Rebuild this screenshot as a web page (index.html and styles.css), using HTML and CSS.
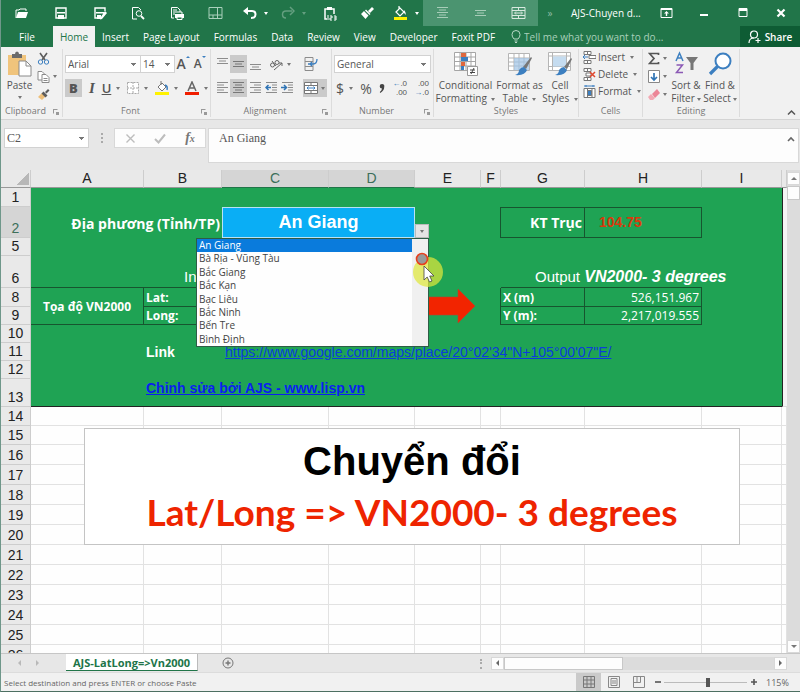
FILE: index.html
```html
<!DOCTYPE html>
<html lang="vi">
<head>
<meta charset="utf-8">
<title>AJS-Chuyen doi</title>
<link rel="stylesheet" href="styles.css">
</head>
<body>
<div class="window">
  <header class="titlebar">
    <div class="quick">
      <button aria-label="Open"><svg width="14" height="14" viewBox="0 0 14 14"><path d="M1 12V4h3l1-1h6v2" fill="none" stroke="#fff"/><path d="M1 12l2-6h10l-2 6z" fill="#fff"/></svg></button>
      <button aria-label="Save"><svg width="14" height="14" viewBox="0 0 14 14"><path d="M2 2h10v10H2z" fill="none" stroke="#fff" stroke-width="1.4"/><path d="M3 6h8v1.500H3zM4 9h6v4H4z" fill="#fff"/></svg></button>
      <button aria-label="Save as"><svg width="14" height="14" viewBox="0 0 14 14"><path d="M12 5V2H2v10h4" fill="none" stroke="#fff" stroke-width="1.400"/><path d="M3 6h8v1.500H3zM4 9h4v4H4zM12 5l2 2-5 6-2 .5.5-2z" fill="#fff"/></svg></button>
      <button aria-label="Print preview"><svg width="14" height="14" viewBox="0 0 14 14" fill="none" stroke="#fff"><path d="M6 13H1.500V1.500h6L10 4"/><circle cx="8" cy="7.500" r="2.800"/><path d="M10 10l3 3" stroke-width="1.800"/></svg></button>
      <button aria-label="Quick print"><svg width="14" height="14" viewBox="0 0 14 14"><path d="M4 12H1.500V1.500h6L10 4v2M3 4h4M3 6h4M3 8h2" fill="none" stroke="#fff"/><path d="M5 8h9v4H5z" fill="#fff"/><path d="M7 6h5v2M7 11h5v2.500H7z" fill="#217549" stroke="#fff"/></svg></button>
      <button aria-label="Freeze panes"><svg width="15" height="14" viewBox="0 0 15 14" fill="none" stroke="#a9d0bb"><path d="M1 1.500h13v11H1zM9.500 1v12M1 9h13M5 9v4"/></svg></button>
    </div>
    <button class="split" aria-label="Undo"><svg width="14" height="14" viewBox="0 0 14 14"><path d="M3 5h6q3.500 0 3.500 3.500T8 12" fill="none" stroke="#fff" stroke-width="2"/><path d="M0 5l5-4v8z" fill="#fff"/></svg><i class="caret"></i></button>
    <button class="split dim" aria-label="Redo"><svg width="14" height="14" viewBox="0 0 14 14"><path d="M11 5H5Q1.500 5 1.500 8.500T5 12" fill="none" stroke="#fff" stroke-width="1.500"/><path d="M9 1l4 4-4 4" fill="none" stroke="#fff" stroke-width="1.500"/></svg><i class="caret"></i></button>
    <button class="single" aria-label="Paste values"><svg width="14" height="15" viewBox="0 0 14 15"><path d="M4 13H2V3h9v5" fill="none" stroke="#fff" stroke-width="1.500"/><path d="M4 1h5v3H4z" fill="#fff"/><path d="M5 9v5M7 10h2v2H7v2h2M11 10h2v4h-2M11 12h2" fill="none" stroke="#fff"/></svg></button>
    <button class="single" aria-label="Format painter"><svg width="14" height="14" viewBox="0 0 14 14"><path d="M12 1l2 2-4 4-2-2zM6 3.500L10.500 8l-1 1L5 4.500zM4 5l4.500 4.500-3 3.500L1 8z" fill="#fff"/></svg></button>
    <button class="split" aria-label="Fill colour"><svg width="15" height="16" viewBox="0 0 15 16"><path d="M3 7l4-4 4 4-4 4zM6 1v4" fill="none" stroke="#fff" stroke-width="1.200"/><path d="M11 5q2 2 2 5l-2-2z" fill="#fff"/><path d="M1 12h13v3H1z" fill="#fff200"/></svg><i class="caret"></i></button>
    <div class="merge">
      <button aria-label="Center"><svg width="13" height="14" viewBox="0 0 13 14" stroke="#a8cdb9"><path d="M1 1.500h11M3 4h7M1 6.500h11M3 9h7M1 11.500h11"/></svg></button>
      <button aria-label="Middle align"><svg width="13" height="14" viewBox="0 0 13 14" stroke="#a8cdb9"><path d="M1 4.500h11M3 7h7M1 9.500h11"/></svg></button>
      <button aria-label="Merge"><svg width="15" height="14" viewBox="0 0 15 14" fill="none" stroke="#d7e9df"><path d="M1 1.500h13v11H1zM1 4.500h13M1 9.500h13M7.500 1v3M7.500 10v3M4 7h7M5 5.500L3.500 7 5 8.500M10 5.500L11.500 7 10 8.500"/></svg></button>
    </div>
    <span class="more">»</span>
    <h1 class="doc">AJS-Chuyen d...</h1>
    <div class="wincontrols">
      <button aria-label="Ribbon options"><svg width="13" height="12" viewBox="0 0 13 12"><path d="M1 1.500h11v9H1z" fill="none" stroke="#fff"/><path d="M1 2h11v1H1zM6.500 4L9 6.500H7.200V9H5.800V6.500H4z" fill="#fff"/></svg></button>
      <button aria-label="Minimize"><svg width="12" height="12" viewBox="0 0 12 12"><path d="M2 8h8" stroke="#fff" stroke-width="2"/></svg></button>
      <button aria-label="Maximize"><svg width="12" height="12" viewBox="0 0 12 12"><path d="M2 1.500h8v8H2z" fill="none" stroke="#fff"/><path d="M2 1h8v3H2z" fill="#fff"/></svg></button>
      <button aria-label="Close"><svg width="12" height="12" viewBox="0 0 12 12"><path d="M2.500 2.500l7 7M9.500 2.500l-7 7" stroke="#fff" stroke-width="2.200"/></svg></button>
    </div>
  </header>

  <nav class="tabs">
    <button class="file">File</button>
    <button class="active">Home</button>
    <button>Insert</button>
    <button>Page Layout</button>
    <button>Formulas</button>
    <button>Data</button>
    <button>Review</button>
    <button>View</button>
    <button>Developer</button>
    <button>Foxit PDF</button>
    <label class="tell"><svg width="10" height="13" viewBox="0 0 10 13" fill="none" stroke="#b9d8c7"><path d="M3 9Q1 7 1 4.500a4 4 0 0 1 8 0Q9 7 7 9zM3.500 11h3M4 12.500h2"/></svg><input type="text" placeholder="Tell me what you want to do..."></label>
    <button class="share"><svg width="13" height="14" viewBox="0 0 13 14" fill="none" stroke="#fff" stroke-width="1.200"><circle cx="6" cy="4.500" r="3.500"/><path d="M1 13q0-5 5-5M10 8v5M7.500 10.500h5"/></svg>Share</button>
  </nav>

  <section class="ribbon">
    <div class="group">
      <div class="tools clipboard">
        <button class="big"><svg width="25" height="26" viewBox="0 0 25 26"><path d="M1 4h18v20H1z" fill="#f0c47c"/><path d="M5 3h3q0-2.500 2-2.500T12 3h3v4H5z" fill="#6b6b6b"/><path d="M12 10h7l5 5v10H12z" fill="#fff" stroke="#8a8a8a"/><path d="M19 10v5h5" fill="none" stroke="#8a8a8a"/></svg><span>Paste</span><i class="caret"></i></button>
        <div class="stack">
          <button aria-label="Cut"><svg width="13" height="13" viewBox="0 0 13 13" fill="none"><path d="M3 1l5 7M10 1L5 8" stroke="#5c5c5c" stroke-width="1.600"/><circle cx="3.500" cy="10" r="2.200" stroke="#3c7fc0"/><circle cx="9.500" cy="10" r="2.200" stroke="#3c7fc0"/></svg></button>
          <button aria-label="Copy"><svg width="13" height="13" viewBox="0 0 13 13" fill="#fff" stroke="#8a8a8a"><path d="M1 1.500h4l3 3V10H1z"/><path d="M5 4.500h4l3 3V12.500H5zM6.500 8.500h4M6.500 10.500h4"/></svg><i class="caret"></i></button>
          <button aria-label="Format painter"><svg width="13" height="13" viewBox="0 0 13 13"><path d="M1 9l4-4 4 3-4 4z" fill="#eebf79"/><path d="M4.500 5.500l2-2 4 4-2 2zM8 4l3-3 1.500 1.500-3 3z" fill="#5c5c5c"/></svg></button>
        </div>
      </div>
      <div class="caption launcher">Clipboard<i class="launch"></i></div>
    </div>

    <div class="group">
      <div class="tools rows">
        <div class="line">
          <select class="fontname" aria-label="Font"><option>Arial</option></select>
          <select class="fontsize" aria-label="Font size"><option>14</option></select>
          <button class="grow" aria-label="Grow font">A<i class="up"></i></button>
          <button class="grow small" aria-label="Shrink font">A<i class="down"></i></button>
        </div>
        <div class="line spread">
          <button class="letter on"><b>B</b></button>
          <button class="letter serif"><em>I</em></button>
          <button class="letter"><u>U</u><i class="caret"></i></button>
          <button aria-label="Borders"><svg width="12" height="12" viewBox="0 0 12 12" fill="#fff" stroke="#a8a8a8"><path d="M.5.500h11v11H.5zM6 0v12M0 6h12" stroke-dasharray="2 1"/></svg><i class="caret"></i></button>
          <button aria-label="Fill colour"><svg width="14" height="15" viewBox="0 0 14 15"><path d="M3 6l4-4 4 4-4 4zM6 0v4" fill="#fff" stroke="#777"/><path d="M10 4q3 1 2 5" fill="none" stroke="#3c7fc0" stroke-width="1.500"/><path d="M0 11h14v3H0z" fill="#fff200"/></svg><i class="caret"></i></button>
          <button aria-label="Font colour"><svg width="14" height="15" viewBox="0 0 14 15"><path d="M3 10l4-9 4 9M4.500 7h5" fill="none" stroke="#666" stroke-width="1.500"/><path d="M0 11h14v3H0z" fill="#f01e00"/></svg><i class="caret"></i></button>
        </div>
      </div>
      <div class="caption launcher">Font<i class="launch"></i></div>
    </div>

    <div class="group">
      <div class="tools rows align">
        <div class="line">
          <button class="cell" aria-label="Top align"><svg width="13" height="14" viewBox="0 0 13 14" stroke="#8c8c8c"><path d="M1 1.500h11M3 4h7M1 6.500h11"/></svg></button>
          <button class="cell on" aria-label="Middle align"><svg width="13" height="14" viewBox="0 0 13 14" stroke="#777"><path d="M1 4.500h11M3 7h7M1 9.500h11"/></svg></button>
          <button class="cell" aria-label="Bottom align"><svg width="13" height="14" viewBox="0 0 13 14" stroke="#8c8c8c"><path d="M1 7.500h11M3 10h7M1 12.500h11"/></svg></button>
          <button class="wide" aria-label="Orientation"><svg width="14" height="13" viewBox="0 0 14 13" fill="none" stroke="#666"><circle cx="3.500" cy="7" r="2"/><path d="M3 3l4 5"/><circle cx="8" cy="4.500" r="2"/><path d="M5 12l8-7M13 8V5h-3"/></svg><i class="caret"></i></button>
          <button class="last" aria-label="Wrap text"><svg width="14" height="14" viewBox="0 0 14 14" fill="none" stroke="#8c8c8c"><path d="M1 .5h8v13H1zM1 4.500h8M1 9.500h8"/><path d="M4 7h5q4 0 4-5M8 5L6 7l2 2" stroke="#3c7fc0" stroke-width="1.300"/></svg></button>
        </div>
        <div class="line">
          <button class="cell" aria-label="Align left"><svg width="13" height="14" viewBox="0 0 13 14" stroke="#8c8c8c"><path d="M1 1.500h11M1 4h7M1 6.500h11M1 9h7M1 11.500h11"/></svg></button>
          <button class="cell on" aria-label="Center"><svg width="13" height="14" viewBox="0 0 13 14" stroke="#777"><path d="M1 1.500h11M3 4h7M1 6.500h11M3 9h7M1 11.500h11"/></svg></button>
          <button class="cell" aria-label="Align right"><svg width="13" height="14" viewBox="0 0 13 14" stroke="#8c8c8c"><path d="M1 1.500h11M5 4h7M1 6.500h11M5 9h7M1 11.500h11"/></svg></button>
          <button class="cell" aria-label="Decrease indent"><svg width="13" height="14" viewBox="0 0 13 14" fill="none" stroke="#8c8c8c"><path d="M1 1.500h11M7 4h5M7 6.500h5M7 9h5M1 11.500h11"/><path d="M6 6.500H1.500M3.500 4L1 6.500 3.500 9" stroke="#2f74b5" stroke-width="1.500"/></svg></button>
          <button class="cell" aria-label="Increase indent"><svg width="13" height="14" viewBox="0 0 13 14" fill="none" stroke="#8c8c8c"><path d="M1 1.500h11M7 4h5M7 6.500h5M7 9h5M1 11.500h11"/><path d="M0 6.500h5M3 4l2.500 2.500L3 9" stroke="#2f74b5" stroke-width="1.500"/></svg></button>
          <button class="last mergebtn on" aria-label="Merge and center"><svg width="14" height="14" viewBox="0 0 14 14" fill="#fff" stroke="#777"><path d="M.5 1.500h13v11H.5zM.5 4.500h13M.5 9.500h13M7 1v3M7 10v3"/><path d="M3 7h8M4.500 5.500L3 7l1.500 1.500M9.500 5.500L11 7 9.500 8.500" fill="none" stroke="#3c7fc0"/></svg><i class="caret"></i></button>
        </div>
      </div>
      <div class="caption launcher">Alignment<i class="launch"></i></div>
    </div>

    <div class="group">
      <div class="tools rows">
        <div class="line"><select class="numfmt" aria-label="Number format"><option>General</option></select></div>
        <div class="line spread numbers">
          <button class="sym">$<i class="caret"></i></button>
          <button class="sym">%</button>
          <button aria-label="Comma style"><svg width="6" height="11" viewBox="0 0 6 11"><path d="M3 1a2.300 2.300 0 0 1 2.300 2.600Q5.200 8 1.200 10L.8 9Q3 7.500 3 5.600A2.300 2.300 0 0 1 3 1z" fill="#444"/></svg></button>
          <button aria-label="Increase decimal" class="dec"><span><em>←</em>.0</span><span>.00</span></button>
          <button aria-label="Decrease decimal" class="dec"><span>.00</span><span><em>→</em>.0</span></button>
        </div>
      </div>
      <div class="caption launcher">Number<i class="launch"></i></div>
    </div>

    <div class="group">
      <div class="tools bigs">
        <button class="big w1"><svg width="26" height="26" viewBox="0 0 26 26"><path d="M1.500 1.500h21v18h-21zM1 6h22M1 10.500h22M1 15h22M7 1v19M13 1v19M18 1v19" fill="#fff" stroke="#a5a5a5"/><path d="M8 2h5v4H8zM8 11h4v4H8z" fill="#e0683e"/><path d="M8 6h7v4H8zM8 15h3v4H8z" fill="#3c7fc0"/><path d="M14.500 15.500h10v9h-10z" fill="#fff" stroke="#999"/><path d="M17 19h5M17 21.500h5M21 17l-3 6" stroke="#444"/></svg><span>Conditional</span><span>Formatting <i class="caret"></i></span></button>
        <button class="big w2"><svg width="26" height="26" viewBox="0 0 26 26"><path d="M1.500 2.500h21v17h-21zM1 7h22M1 11h22M1 15h22M7 2v18M12 2v18M17 2v18" fill="#fff" stroke="#b5b5b5"/><path d="M7 7h15v12H7z" fill="#9fc3e6" opacity=".7"/><path d="M25 7l-6 11-3-2 8-10z" fill="#777"/><path d="M17 16l3 3q-2 6-12 5 4-1 4-5 2-3 5-3z" fill="#3c7fc0"/></svg><span>Format as</span><span>Table <i class="caret"></i></span></button>
        <button class="big w3"><svg width="26" height="26" viewBox="0 0 26 26"><path d="M1.500 1.500h22v18h-22zM1 5h23M1 15.500h23M5.500 1v19M19.500 1v19" fill="#fff" stroke="#b5b5b5"/><path d="M6 5.500h13v10H6z" fill="#c5dcf0"/><path d="M25 8l-5 10-3-2 7-9z" fill="#777"/><path d="M17 16l3 3q-2 6-12 5 4-1 4-5 2-3 5-3z" fill="#3c7fc0"/></svg><span>Cell</span><span>Styles <i class="caret"></i></span></button>
      </div>
      <div class="caption">Styles</div>
    </div>

    <div class="group">
      <div class="tools cells">
        <button><svg width="13" height="13" viewBox="0 0 13 13" fill="#fff" stroke="#777"><path d="M1 .5h7v3H1zM1 9.500h7v3H1zM4.500 0v4M4.500 9v4M6 4.500h7v3H6z"/><path d="M0 6h5M2 4L0 6l2 2" stroke="#3c7fc0"/></svg>Insert<i class="caret"></i></button>
        <button><svg width="13" height="13" viewBox="0 0 13 13" fill="#fff" stroke="#777"><path d="M1 .5h7v3H1zM1 9.500h7v3H1zM4.500 0v4M4.500 9v4M3 5h5v3H3z"/><path d="M7 4l5 5M12 4L7 9" stroke="#e0482e" stroke-width="1.500"/></svg>Delete<i class="caret"></i></button>
        <button><svg width="13" height="13" viewBox="0 0 13 13" fill="#fff" stroke="#777"><path d="M1 3.500h11v9H1zM4.500 3v9M9 3v9"/><path d="M4.500 5.500h4v5h-4z" fill="#3c7fc0"/><path d="M1 1h11M3 0v2M10 0v2" stroke="#3c7fc0"/></svg>Format<i class="caret"></i></button>
      </div>
      <div class="caption">Cells</div>
    </div>

    <div class="group">
      <div class="tools editing">
        <div class="stack">
          <button aria-label="AutoSum"><svg width="12" height="13" viewBox="0 0 12 13"><path d="M10.500 3V1.500h-9L6 6.500l-4.500 5h9V10" fill="none" stroke="#555" stroke-width="1.700"/></svg><i class="caret"></i></button>
          <button aria-label="Fill"><svg width="12" height="13" viewBox="0 0 12 13" fill="#fff"><path d="M.5.500h11v12H.5z" stroke="#888"/><path d="M6 3v7M3 7l3 3 3-3" fill="none" stroke="#2f74b5" stroke-width="1.700"/></svg><i class="caret"></i></button>
          <button aria-label="Clear"><svg width="12" height="13" viewBox="0 0 12 13"><path d="M4 6l5-5 3 4-5 5z" fill="#ec8697"/><path d="M0 9l3-3 4 4-2 2H2z" fill="#f3a9b4"/></svg><i class="caret"></i></button>
        </div>
        <button class="big"><svg width="25" height="26" viewBox="0 0 25 26"><path d="M2 10L5.500 2 9 10M3.500 7h4" fill="none" stroke="#3c7fc0" stroke-width="1.500"/><path d="M2.500 14h6l-6 7.500h6.500" fill="none" stroke="#8b59b5" stroke-width="1.500"/><path d="M12 6h12l-4.500 6v7h-3v-7z" fill="#777"/></svg><span>Sort &amp;</span><span>Filter<i class="caret"></i></span></button>
        <button class="big"><svg width="25" height="26" viewBox="0 0 25 26"><circle cx="15" cy="10" r="7.500" fill="#fff" stroke="#3c7fc0" stroke-width="2"/><path d="M9.500 15.500L2 23" stroke="#3c7fc0" stroke-width="3.200"/></svg><span>Find &amp;</span><span>Select<i class="caret"></i></span></button>
      </div>
      <div class="caption">Editing</div>
    </div>
    <button class="collapse" aria-label="Collapse ribbon"><svg width="9" height="7" viewBox="0 0 9 7"><path d="M1 5.500L4.500 2 8 5.500" fill="none" stroke="#555" stroke-width="1.500"/></svg></button>
  </section>

  <section class="formula">
    <select class="namebox" aria-label="Name box"><option>C2</option></select>
    <span class="grip"></span>
    <div class="fx">
      <button aria-label="Cancel"><svg width="11" height="11" viewBox="0 0 11 11"><path d="M1.500 1.500l8 8M9.500 1.500l-8 8" stroke="#bdbdbd" stroke-width="1.400"/></svg></button>
      <button aria-label="Enter"><svg width="12" height="11" viewBox="0 0 12 11"><path d="M1 6l3.500 3.500L11 1.500" fill="none" stroke="#bdbdbd" stroke-width="2"/></svg></button>
      <button aria-label="Insert function" class="fn">f<sub>x</sub></button>
    </div>
    <div class="entry"><input type="text" value="An Giang" aria-label="Formula bar"><svg width="8" height="6" viewBox="0 0 8 6"><path d="M1 5l3-3 3 3" fill="none" stroke="#666" stroke-width="1.600"/></svg></div>
  </section>

  <main class="sheet">
    <div class="canvas">
      <table>
        <colgroup><col class="c-h"><col class="c-a"><col class="c-b"><col class="c-c"><col class="c-d"><col class="c-e"><col class="c-f"><col class="c-g"><col class="c-hh"><col class="c-i"><col></colgroup>
        <thead><tr><th class="corner"></th><th>A</th><th>B</th><th class="sel">C</th><th class="sel">D</th><th>E</th><th>F</th><th>G</th><th>H</th><th>I</th><th></th></tr></thead>
        <tbody class="green">
          <tr class="h19"><th>1</th><td colspan="9"></td><td class="out"></td></tr>
          <tr class="h31"><th class="sel">2</th><td colspan="2" class="place">Địa phương (Tỉnh/TP)</td><td colspan="2" class="picked">An Giang</td><td colspan="2" class="box-left"></td><td class="box kt">KT Trục</td><td class="box axis">104.75</td><td></td><td class="out"></td></tr>
          <tr class="h18"><th>5</th><td colspan="9"></td><td class="out"></td></tr>
          <tr class="h32"><th>6</th><td class="under"></td><td colspan="3" class="under in">Input</td><td colspan="2"></td><td colspan="2" class="under output">Output <b>VN2000- 3 degrees</b></td><td></td><td class="out"></td></tr>
          <tr class="h19"><th>8</th><td rowspan="2" class="box toado">Tọa độ VN2000</td><td class="box key">Lat:</td><td colspan="2" class="box"></td><td colspan="2" class="box-left"></td><td class="box key">X (m)</td><td class="box num">526,151.967</td><td></td><td class="out"></td></tr>
          <tr class="h18"><th>9</th><td class="box key">Long:</td><td colspan="2" class="box"></td><td colspan="2" class="box-left"></td><td class="box key">Y (m):</td><td class="box num">2,217,019.555</td><td></td><td class="out"></td></tr>
          <tr class="h18"><th>10</th><td colspan="9"></td><td class="out"></td></tr>
          <tr class="h18"><th>11</th><td></td><td class="linkname">Link</td><td colspan="7" class="link"><a href="#map">https://www.google.com/maps/place/20°02'34"N+105°00'07"E/</a></td><td class="out"></td></tr>
          <tr class="h18"><th>12</th><td colspan="9"></td><td class="out"></td></tr>
          <tr class="h28 end"><th>13</th><td></td><td colspan="8" class="credit"><a href="#lisp">Chỉnh sửa bởi AJS - www.lisp.vn</a></td><td class="out"></td></tr>
        </tbody>
        <tbody class="plain">
          <tr class="h19"><th>14</th><td></td><td></td><td></td><td></td><td></td><td></td><td></td><td></td><td></td><td></td></tr>
          <tr class="h19"><th>15</th><td></td><td></td><td></td><td></td><td></td><td></td><td></td><td></td><td></td><td></td></tr>
          <tr><th>16</th><td></td><td></td><td></td><td></td><td></td><td></td><td></td><td></td><td></td><td></td></tr>
          <tr><th>17</th><td></td><td></td><td></td><td></td><td></td><td></td><td></td><td></td><td></td><td></td></tr>
          <tr><th>18</th><td></td><td></td><td></td><td></td><td></td><td></td><td></td><td></td><td></td><td></td></tr>
          <tr><th>19</th><td></td><td></td><td></td><td></td><td></td><td></td><td></td><td></td><td></td><td></td></tr>
          <tr><th>20</th><td></td><td></td><td></td><td></td><td></td><td></td><td></td><td></td><td></td><td></td></tr>
          <tr><th>21</th><td></td><td></td><td></td><td></td><td></td><td></td><td></td><td></td><td></td><td></td></tr>
          <tr><th>22</th><td></td><td></td><td></td><td></td><td></td><td></td><td></td><td></td><td></td><td></td></tr>
          <tr><th>23</th><td></td><td></td><td></td><td></td><td></td><td></td><td></td><td></td><td></td><td></td></tr>
          <tr><th>24</th><td></td><td></td><td></td><td></td><td></td><td></td><td></td><td></td><td></td><td></td></tr>
          <tr><th>25</th><td></td><td></td><td></td><td></td><td></td><td></td><td></td><td></td><td></td><td></td></tr>
          <tr><th>26</th><td></td><td></td><td></td><td></td><td></td><td></td><td></td><td></td><td></td><td></td></tr>
        </tbody>
      </table>

      <svg class="arrow" width="48" height="38" viewBox="0 0 48 38"><path d="M0 10h30V2l17 17-17 17v-8H0z" fill="#f22400" stroke="#b5432c" stroke-width=".6"/></svg>
      <button class="opener" aria-label="Open list"><i class="caret"></i></button>
      <div class="dropdown">
        <ul role="listbox" aria-label="Địa phương">
          <li role="option" aria-selected="true">An Giang</li>
          <li role="option">Bà Rịa - Vũng Tàu</li>
          <li role="option">Bắc Giang</li>
          <li role="option">Bắc Kạn</li>
          <li role="option">Bạc Liêu</li>
          <li role="option">Bắc Ninh</li>
          <li role="option">Bến Tre</li>
          <li role="option">Bình Định</li>
        </ul>
        <div class="track"></div>
      </div>
      <svg class="pointer" width="40" height="40" viewBox="0 0 40 40"><circle cx="18" cy="22" r="15" fill="#dfe83c" opacity=".72"/><circle cx="12" cy="9" r="5.500" fill="#999" stroke="#e8401c" stroke-width="1.600"/><path d="M14 16v14l3.200-3 2.300 5 2.500-1-2.300-5H24z" fill="#fff" stroke="#444" stroke-width=".8"/></svg>
      <div class="textbox">
        <p class="big-title">Chuyển đổi</p>
        <p class="big-sub">Lat/Long =&gt; VN2000- 3 degrees</p>
      </div>
    </div>
    <div class="vscroll"><button aria-label="Scroll up"><i class="tri up"></i></button><span class="thumb"></span><button class="bottom" aria-label="Scroll down"><i class="tri down"></i></button></div>
  </main>

  <footer class="sheetbar">
    <div class="navs"><i class="tri left"></i><i class="tri right"></i></div>
    <button class="sheettab">AJS-LatLong=&gt;Vn2000</button>
    <button class="add" aria-label="New sheet"><svg width="12" height="12" viewBox="0 0 12 12" fill="none" stroke="#777"><circle cx="6" cy="6" r="5"/><path d="M6 3.500v5M3.500 6h5" stroke-width="1.400"/></svg></button>
    <span class="grip"></span>
    <div class="hscroll"><button aria-label="Scroll left"><i class="tri left"></i></button><span class="thumb"></span><button class="bottom" aria-label="Scroll right"><i class="tri right"></i></button></div>
  </footer>

  <footer class="status">
    <span class="msg">Select destination and press ENTER or choose Paste</span>
    <button class="view on" aria-label="Normal view"><svg width="12" height="12" viewBox="0 0 12 12" fill="none" stroke="#777"><path d="M.5.500h11v11H.5zM0 4h12M0 8h12M4 0v12M8 0v12"/></svg></button>
    <button class="view" aria-label="Page layout view"><svg width="12" height="12" viewBox="0 0 12 12" fill="none" stroke="#888"><path d="M.5.500h11v11H.5zM3 2.500h6v7H3zM5 4v4M7 4v4"/></svg></button>
    <button class="view" aria-label="Page break view"><svg width="12" height="12" viewBox="0 0 12 12" fill="none" stroke="#888"><path d="M.5.500h11v11H.5zM.5 6.500h7V.5M4 .5v6"/></svg></button>
    <button class="zoombtn" aria-label="Zoom out"><svg width="8" height="8" viewBox="0 0 8 8"><path d="M1 4h6" stroke="#555" stroke-width="1.600"/></svg></button>
    <input type="range" min="0" max="100" value="53" aria-label="Zoom">
    <button class="zoombtn" aria-label="Zoom in"><svg width="8" height="8" viewBox="0 0 8 8"><path d="M1 4h6M4 1v6" stroke="#555" stroke-width="1.600"/></svg></button>
    <span class="pct">115%</span>
  </footer>
</div>
</body>
</html>
```
FILE: styles.css
```css
* { box-sizing: border-box; }

body {
  margin: 0;
  font-family: "Open Sans", "Noto Sans", sans-serif;
  font-size: 10px;
  color: #555;
}

button, input, select {
  margin: 0;
  padding: 0;
  border: 0;
  background: none;
  font: inherit;
  color: inherit;
  border-radius: 0;
  appearance: none;
}

button {
  display: inline-flex;
  align-items: center;
  justify-content: center;
  white-space: nowrap;
}

svg { display: block; flex: none; }
p, h1, ul { margin: 0; padding: 0; }

.window {
  display: flex;
  flex-direction: column;
  height: 100vh;
  background: #e7e7e7;
  border-left: 1px solid #6f978a;
  border-bottom: 1px solid #4d6f62;
  overflow: hidden;
}

.caret {
  flex: none;
  display: inline-block;
  border-style: solid;
  border-color: #777 transparent transparent;
  border-width: 3px 2px 0;
}

/* Title bar */
.titlebar {
  display: flex;
  align-items: center;
  flex: 0 0 26px;
  background: #217549;
  color: #fff;
}
.titlebar .caret { border-top-color: #fff; }
.quick { display: grid; grid-template-columns: repeat(6, 1fr); width: 232px; margin-left: 2px; }
.split { width: 38px; gap: 7px; padding-left: 3px; }
.single { width: 37px; }
.dim { opacity: .3; }
.merge {
  display: grid;
  grid-template-columns: repeat(3, 1fr);
  align-self: stretch;
  width: 115px;
  background: #4b9470;
}
.more { width: 24px; text-align: center; line-height: 12px; color: #8fbba3; }
.doc { flex: 1; padding-left: 9px; font-size: 10px; font-weight: 400; white-space: nowrap; }
.wincontrols { display: grid; grid-template-columns: repeat(4, 1fr); width: 153px; }

/* Ribbon tabs */
.tabs {
  display: flex;
  flex: 0 0 21px;
  background: #217549;
  color: #fff;
}
.tabs button { padding: 0 7px; font-weight: 500; }
.tabs .file { width: 52px; }
.tabs .active { background: #f1f1f1; color: #217549; width: 42px; }
.tell { display: flex; flex: 1; align-items: center; gap: 3px; padding-left: 9px; }
.tell input { flex: 1; min-width: 0; }
.tell input::placeholder { color: #a9d0bb; opacity: 1; }
.tabs .share { width: 60px; gap: 4px; background: #0e5c34; font-weight: 600; }

/* Ribbon */
.ribbon {
  display: grid;
  grid-template-columns: 62px 148px 121px 102px 145px 64px 97px 1fr;
  flex: 0 0 73px;
  background: #f1f1f1;
  border-bottom: 1px solid #d4d4d4;
}
.group { display: flex; flex-direction: column; border-right: 1px solid #dcdcdc; margin: 2px 0; }
.tools { flex: 1; display: flex; }
.caption { position: relative; height: 12px; font-size: 9px; line-height: 12px; text-align: center; color: #777; }
.launcher { padding-right: 12px; font-size: 9px; }
.launch {
  position: absolute;
  right: 4px;
  top: 4px;
  width: 5px;
  height: 5px;
  border: 1px solid #999;
  border-right-color: transparent;
  border-bottom-color: transparent;
}
.launch::after { content: ""; position: absolute; left: 2px; top: 2px; width: 3px; height: 3px; background: #999; }

.big { flex-direction: column; justify-content: flex-start; line-height: 13px; padding-top: 2px; }
.big svg { margin-bottom: 2px; }
.big .caret { vertical-align: middle; margin-left: 2px; }
.clipboard { padding-left: 6px; }
.clipboard .big { width: 25px; }
.clipboard .big .caret { margin: 4px 0 0; }
.stack { display: flex; flex-direction: column; gap: 4px; padding: 2px 0 0 5px; align-items: flex-start; }
.stack button { gap: 3px; height: 14px; }

.rows { flex-direction: column; gap: 6px; padding: 6px 2px 0 2px; }
.line { display: flex; align-items: center; height: 18px; }
.spread { justify-content: space-between; }
.spread button { gap: 5px; }
select {
  height: 18px;
  padding: 0 2px;
  border: 1px solid #d2d2d2;
  background: #fff conic-gradient(from -45deg at 50% 100%, #777 90deg, transparent 0) no-repeat right 4px center / 5px 3px;
}
.fontname { width: 76px; }
.fontsize { width: 34px; border-left: 0; }
.grow { position: relative; flex: 1; font-size: 14px; font-weight: 600; line-height: 16px; }
.grow.small { font-size: 12px; }
.grow i { border: 2px solid transparent; align-self: flex-start; }
.grow .up { border-bottom-color: #3c7fc0; border-top: 0; }
.grow .down { border-top-color: #3c7fc0; border-bottom: 0; }
.letter { font-size: 13px; height: 18px; font-weight: 600; }
.on { background: #cacaca; }
.letter.on { width: 17px; }
.serif { font-family: "Liberation Serif", serif; font-size: 15px; font-weight: 700; }
.align { padding-left: 3px; }
.cell { width: 16px; height: 18px; }
.cell.on { width: 17px; }
.wide { gap: 4px; margin-left: 6px; }
.last { margin-left: auto; width: 24px; height: 18px; gap: 3px; justify-content: flex-start; padding-left: 1px; }
.mergebtn { margin-right: 2px; }
.wide + .last { margin-right: 2px; }
.numfmt { width: 97px; }
.numbers { padding: 0 2px; }
.sym { font-size: 14px; }
.dec { flex-direction: column; align-items: flex-end; font-family: "Liberation Sans", sans-serif; font-size: 8px; line-height: 9px; }
.spread .dec { gap: 0; }
.dec em { color: #2f74b5; font-style: normal; }
.bigs .w1 { width: 61px; padding-left: 2px; }
.bigs .w2 { width: 47px; padding-left: 2px; }
.bigs .w3 { width: 36px; }
.cells { flex-direction: column; align-items: flex-start; gap: 3px; padding: 1px 0 0 4px; }
.cells button { gap: 2px; height: 14px; }
.cells .caret { margin-left: 3px; }
.editing .big { width: 34px; }
.editing .stack { width: 26px; }
.collapse { align-self: end; justify-self: end; padding: 3px 4px; }

/* Formula bar */
.formula { display: flex; flex: 0 0 50px; padding: 8px 1px 7px 3px; align-items: flex-start; }
.namebox { width: 85px; height: 20px; }
.namebox, .entry, .fn { font-family: "Liberation Serif", serif; font-size: 12px; }
.grip { width: 25px; height: 20px; background: radial-gradient(circle, #aaa 1px, transparent 1px) center / 4px 4px no-repeat, radial-gradient(circle, #aaa 1px, transparent 1px) center 4px / 4px 4px no-repeat, radial-gradient(circle, #aaa 1px, transparent 1px) center 12px / 4px 4px no-repeat; }
.fx { display: grid; grid-template-columns: repeat(3, 1fr); width: 92px; height: 20px; border: 1px solid #d8d8d8; background: #fdfdfd; }
.fn { font-style: italic; font-size: 14px; font-weight: 700; color: #777; }
.fn sub { font-size: 10px; }
.entry { display: flex; flex: 1; align-items: flex-start; margin-left: 2px; height: 35px; border: 1px solid #d8d8d8; background: #fdfdfd; padding: 1px 3px 0 10px; }
.entry input { flex: 1; min-width: 0; line-height: 16px; }
.entry svg { margin-top: 6px; }

/* Worksheet */
.sheet { display: flex; flex: 1; min-height: 0; border-bottom: 1px solid #c6c6c6; }
.canvas { position: relative; flex: 1; min-width: 0; overflow: hidden; font-family: "Liberation Sans", sans-serif; }
table { width: 100%; table-layout: fixed; border-spacing: 0; font-size: 14px; color: #222; }
.c-h { width: 30px; }
.c-a { width: 113px; }
.c-b { width: 78px; }
.c-c { width: 107px; }
.c-d { width: 86px; }
.c-e { width: 66px; }
.c-f { width: 20px; }
.c-g { width: 84px; }
.c-hh { width: 117px; }
.c-i { width: 80px; }
th, td { padding: 0; height: 20px; line-height: 17px; vertical-align: bottom; white-space: nowrap; }
th { font-weight: 400; background: #e9e9e9; border-right: 1px solid #cdcdcd; border-bottom: 1px solid #cdcdcd; }
thead th { height: 18px; border-bottom-color: #999; }
.corner { background: linear-gradient(135deg, transparent 50%, #b8b8b8 50%) no-repeat 16px 3px / 12px 12px #e9e9e9; }
.sel { background: #d5d5d5; color: #3c6f5a; }
thead .sel { border-bottom-color: #217549; }
.h18 > * { height: 18px; }
.h19 > * { height: 19px; }
.h28 > * { height: 28px; }
.h31 > * { height: 31px; }
.h32 > * { height: 32px; }
.green td { background: #1fa354; color: #fff; }
.green .out { background: #f4f4f4; border-left: 1px solid #222; }
.end td { border-bottom: 1px solid #222; }
.green .end .out { border-bottom-color: #ddd; }
.plain td { background: #fefefe; border-right: 1px solid #e2e2e2; border-bottom: 1px solid #e2e2e2; }
.box { border-right: 1px solid #17552f; border-bottom: 1px solid #17552f; }
.box-left { border-right: 1px solid #17552f; }
.under { border-bottom: 1px solid #17552f; }
.h31 .box { border-top: 1px solid #17552f; }
.place, .kt, .toado, .key, .num { font-family: "Open Sans", "Noto Sans", sans-serif; font-weight: 700; }
.place, .kt { text-align: right; padding: 0 2px 6px 0; font-size: 14px; }
.green .picked { background: #0aaef5; border: 1px solid #b9e2f5; font-size: 18px; font-weight: 700; text-align: center; vertical-align: middle; }
.green .axis { color: #d93a0c; font-weight: 700; padding: 0 0 6px 14px; }
.in { padding-left: 40px; font-size: 15px; }
.h32 td { line-height: 20px; }
.output { padding-left: 34px; font-size: 15px; }
.output b { font-style: italic; font-size: 16px; }
.toado { text-align: center; vertical-align: middle; font-size: 12px; }
.key { padding-left: 2px; font-size: 12px; }
.num { padding-right: 2px; font-size: 12px; font-weight: 400; text-align: right; }
.linkname { padding-left: 2px; font-weight: 700; }
.link { padding-left: 3px; }
.sheet a { color: #0a3cdc; }
.credit { padding: 0 0 9px 2px; font-weight: 700; }
.green .credit a { color: #0a1ef0; }

.arrow { position: absolute; left: 427px; top: 117px; }
.opener { position: absolute; left: 414px; top: 54px; width: 14px; height: 14px; background: #e4e4e4; border: 1px solid #bbb; }
.dropdown {
  position: absolute;
  left: 195px;
  top: 68px;
  display: flex;
  width: 233px;
  height: 109px;
  border: 1px solid #2e5c46;
  background: #fefefe;
  font-family: "Open Sans", "Noto Sans", sans-serif;
  font-size: 10px;
}
.dropdown ul { flex: 1; display: grid; grid-template-rows: repeat(8, 1fr); list-style: none; }
.dropdown li { padding-left: 2px; line-height: 13px; color: #444; }
.dropdown li[aria-selected] { background: #0a7bdc; color: #fff; }
.track { width: 16px; background: #f0f0f0; }
.pointer { position: absolute; left: 409px; top: 80px; }
.textbox {
  position: absolute;
  left: 83px;
  right: 47px;
  top: 258px;
  height: 117px;
  padding-top: 8px;
  border: 1px solid #c4c4c4;
  background: #fff;
  text-align: center;
  font-weight: 700;
}
.big-title { font-size: 40px; line-height: 48px; color: #000; }
.big-sub { font-family: Lato, sans-serif; font-size: 37px; line-height: 54px; color: #ee2400; white-space: nowrap; }

.tri { border: 3px solid transparent; }
.tri.up { border-top: 0; border-bottom-color: #777; }
.tri.down { border-bottom: 0; border-top-color: #777; }
.tri.left { border-left: 0; border-right-color: #666; }
.tri.right { border-right: 0; border-left-color: #666; }
.vscroll { display: flex; flex-direction: column; flex: 0 0 13px; gap: 1px; padding-top: 2px; background: #dcdcdc; }
.vscroll button, .hscroll button { width: 13px; height: 13px; background: #fdfdfd; border: 1px solid #d8d8d8; }
.vscroll .thumb { height: 14px; background: #fdfdfd; border: 1px solid #c8c8c8; }
.vscroll .bottom { margin-top: auto; }

.sheetbar { display: flex; flex: 0 0 18px; align-items: center; background: #e7e7e7; }
.navs { display: flex; gap: 15px; width: 65px; padding-left: 17px; opacity: .35; }
.sheettab { align-self: stretch; margin-bottom: 1px; padding: 0 7px; background: #fff; border-bottom: 1px solid #217549; border-right: 1px solid #bbb; color: #217549; font-size: 11px; font-weight: 700; }
.add { margin-left: 24px; margin-right: auto; }
.hscroll { display: flex; width: 296px; margin-right: 13px; background: #dcdcdc; }
.hscroll .thumb { width: 119px; background: #fdfdfd; border: 1px solid #c8c8c8; }
.hscroll .bottom { margin-left: auto; }
.sheetbar .grip { width: 20px; height: 18px; }

.status { display: flex; flex: 0 0 19px; align-items: center; background: #f1f1f1; border-top: 1px solid #dcdcdc; font-size: 9px; color: #666; }
.msg { flex: 1; padding-left: 3px; font-size: 8px; }
.view { width: 25px; align-self: stretch; }
.zoombtn { width: 13px; }
.status input { width: 83px; height: 12px; background: linear-gradient(#bbb, #bbb) no-repeat center / 100% 1px; }
.status input::-webkit-slider-thumb { appearance: none; width: 4px; height: 9px; background: #555; }
.pct { width: 40px; padding-left: 6px; }
```
